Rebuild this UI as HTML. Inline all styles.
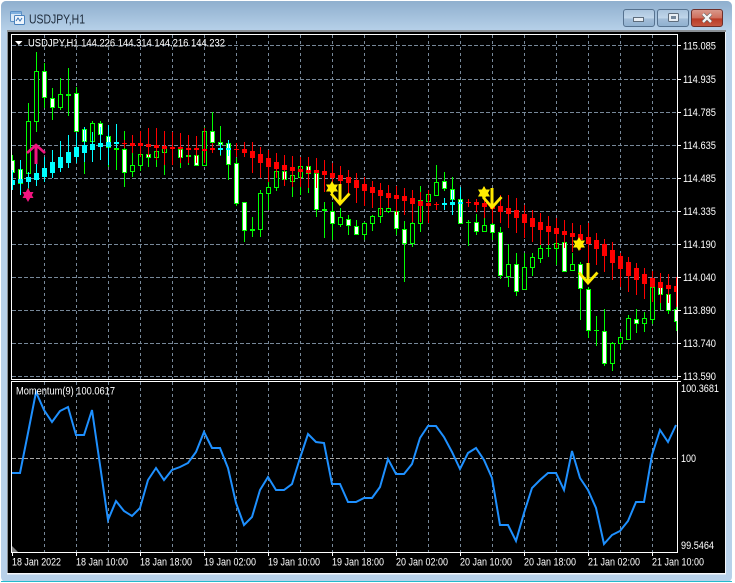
<!DOCTYPE html>
<html><head><meta charset="utf-8"><title>USDJPY,H1</title>
<style>
html,body{margin:0;padding:0;background:#fff;width:735px;height:583px;overflow:hidden}
svg{display:block}
text{font-family:"Liberation Sans",sans-serif;font-size:10.8px;fill:#fff}
</style></head><body>
<svg width="735" height="583" viewBox="0 0 735 583" xmlns="http://www.w3.org/2000/svg">
<defs>
<linearGradient id="tb" x1="0" y1="0" x2="0" y2="1"><stop offset="0" stop-color="#8fafce"/><stop offset="1" stop-color="#b8d2ea"/></linearGradient>
<linearGradient id="bt" x1="0" y1="0" x2="0" y2="1"><stop offset="0" stop-color="#a9c3dc"/><stop offset=".5" stop-color="#c0d6ea"/><stop offset=".55" stop-color="#a2bdd8"/><stop offset="1" stop-color="#8fb0cf"/></linearGradient>
<linearGradient id="cl" x1="0" y1="0" x2="0" y2="1"><stop offset="0" stop-color="#d99a8e"/><stop offset=".5" stop-color="#cf6f5c"/><stop offset=".55" stop-color="#b93a26"/><stop offset="1" stop-color="#c65a44"/></linearGradient>
<clipPath id="mc"><rect x="12" y="35" width="665" height="344"/></clipPath>
<clipPath id="ic"><rect x="12" y="382" width="665" height="170"/></clipPath>
</defs>
<rect x="1" y="1" width="731" height="581" rx="5" fill="#b8d1ea"/>
<path d="M6 1H727a5 5 0 0 1 5 5V32H1V6a5 5 0 0 1 5-5z" fill="url(#tb)"/>
<rect x="1" y="581" width="731" height="1" fill="#25b9cc"/>
<rect x="7" y="30" width="719" height="2" fill="#8a8f94"/>
<rect x="7" y="32" width="1" height="542" fill="#8a8f94"/>
<rect x="725" y="32" width="1" height="542" fill="#f2f6fb"/>
<rect x="7" y="573" width="719" height="1.5" fill="#f4f7fb"/>
<rect x="8" y="32" width="717" height="541" fill="#000"/>

<!-- title -->
<g>
<rect x="10.5" y="11.5" width="11" height="10" rx="1" fill="#d9e8f6" stroke="#5b8fc4"/>
<rect x="14.5" y="15.5" width="10" height="9" rx="1" fill="#eef5fc" stroke="#4a82bd"/>
<path d="M16 21l2-3 2 3 2-3" fill="none" stroke="#3a74b5"/>
<rect x="11" y="12" width="10" height="2" fill="#7fb0df"/>
</g>
<text x="29" y="23.5" style="font-size:13px;fill:#1d2a3a" textLength="56" lengthAdjust="spacingAndGlyphs">USDJPY,H1</text>
<rect x="623.5" y="9.5" width="31" height="17" rx="2.5" fill="url(#bt)" stroke="#56728f"/>
<rect x="633.5" y="17.5" width="10" height="4" fill="#e8eef4" stroke="#5e6d7c"/>
<rect x="657.5" y="9.5" width="31" height="17" rx="2.5" fill="url(#bt)" stroke="#56728f"/>
<rect x="668.5" y="13.5" width="10" height="8" rx="1" fill="#e8eef4" stroke="#5e6d7c"/><rect x="671" y="16" width="5" height="3" fill="#73869a"/>
<rect x="691.5" y="9.5" width="31" height="17" rx="2.5" fill="url(#cl)" stroke="#6e2f2a"/>
<path d="M703 14l8 8M711 14l-8 8" stroke="#5c5c5c" stroke-width="3.6"/>
<path d="M703 14l8 8M711 14l-8 8" stroke="#f4f4f4" stroke-width="2.4"/>

<!-- grid -->
<g stroke="#778899" stroke-width="1" fill="none" shape-rendering="crispEdges">
<path stroke-dasharray="4 2" d="M12 45.5H677M12 79.5H677M12 112.5H677M12 145.5H677M12 178.5H677M12 211.5H677M12 244.5H677M12 277.5H677M12 310.5H677M12 343.5H677M12 376.5H677"/>
<path stroke-dasharray="3 3" d="M44.5 35V379M76.5 35V379M108.5 35V379M140.5 35V379M172.5 35V379M204.5 35V379M236.5 35V379M268.5 35V379M300.5 35V379M332.5 35V379M364.5 35V379M396.5 35V379M428.5 35V379M460.5 35V379M492.5 35V379M524.5 35V379M556.5 35V379M588.5 35V379M620.5 35V379M652.5 35V379"/>
<path stroke-dasharray="3 3" d="M44.5 382V552M76.5 382V552M108.5 382V552M140.5 382V552M172.5 382V552M204.5 382V552M236.5 382V552M268.5 382V552M300.5 382V552M332.5 382V552M364.5 382V552M396.5 382V552M428.5 382V552M460.5 382V552M492.5 382V552M524.5 382V552M556.5 382V552M588.5 382V552M620.5 382V552M652.5 382V552"/>
<path stroke="#a8a8a8" stroke-dasharray="4 2" d="M12 458.5H677"/>
</g>

<g clip-path="url(#mc)" shape-rendering="crispEdges">
<!-- green wicks -->
<path fill="none" stroke="#00ff00" d="M12.5 155V178M20.5 160V190M28.5 103V192M36.5 52V132M44.5 63V108M52.5 88V120M60.5 78V110M68.5 68V116M76.5 87V131M84.5 127V174M92.5 121V162M100.5 121V155M108.5 135V167M116.5 148V170M124.5 131V187M132.5 135V177M140.5 153V171M148.5 154V167M156.5 150V167M164.5 140V175M172.5 147V150M180.5 148V168M188.5 150V165M196.5 150V165M204.5 127V166M212.5 112V142M220.5 126V156M228.5 140V180M236.5 158V206M244.5 202V242M252.5 217V237M260.5 190V237M268.5 182V210M276.5 170V191M284.5 168V185M292.5 173V197M300.5 165V195M308.5 165V193M316.5 170V217M324.5 202V238M332.5 202V240M340.5 208V227M348.5 215V235M356.5 220V235M364.5 222V240M372.5 215V231M380.5 207V223M388.5 208V213M396.5 210V235M404.5 221V282M412.5 220V247M420.5 186V232M428.5 192V210M436.5 165V195M444.5 172V191M452.5 177V200M460.5 198V223M468.5 220V246M476.5 214V235M484.5 218V231M492.5 221V240M500.5 227V279M508.5 244V287M516.5 253V296M524.5 253V290M532.5 253V276M540.5 244V263M548.5 243V257M556.5 243V265M564.5 241V272M572.5 253V271M580.5 262V320M588.5 287V338M596.5 316V346M604.5 309V366M612.5 342V371M620.5 332V350M628.5 315V339M636.5 309V333M644.5 312V332M652.5 287V324M660.5 282V310M668.5 293V314M676.5 307V331"/>
<!-- doji -->
<path fill="#00ff00" d="M66 94h5v2h-5zM114 148h5v2h-5zM170 147h5v2h-5zM186 155h5v2h-5zM250 229h5v2h-5zM322 209h5v2h-5zM466 222h5v1h-5zM546 248h5v1h-5zM594 330h5v1h-5z"/>
<!-- white bodies -->
<path fill="#fff" stroke="#00ff00" d="M10.5 160.5h4V172.5h-4zM18.5 169.5h4V183.5h-4zM42.5 71.5h4V97.5h-4zM50.5 98.5h4V107.5h-4zM74.5 93.5h4V131.5h-4zM82.5 129.5h4V141.5h-4zM98.5 123.5h4V134.5h-4zM106.5 136.5h4V147.5h-4zM122.5 149.5h4V172.5h-4zM146.5 154.5h4V157.5h-4zM178.5 149.5h4V157.5h-4zM194.5 155.5h4V165.5h-4zM210.5 131.5h4V142.5h-4zM218.5 142.5h4V144.5h-4zM226.5 143.5h4V164.5h-4zM234.5 163.5h4V203.5h-4zM242.5 202.5h4V230.5h-4zM282.5 171.5h4V179.5h-4zM306.5 166.5h4V173.5h-4zM314.5 173.5h4V209.5h-4zM330.5 211.5h4V223.5h-4zM346.5 219.5h4V225.5h-4zM354.5 226.5h4V234.5h-4zM394.5 211.5h4V228.5h-4zM402.5 229.5h4V243.5h-4zM442.5 181.5h4V188.5h-4zM450.5 189.5h4V199.5h-4zM458.5 199.5h4V223.5h-4zM474.5 222.5h4V231.5h-4zM490.5 224.5h4V232.5h-4zM498.5 232.5h4V275.5h-4zM514.5 264.5h4V291.5h-4zM562.5 242.5h4V271.5h-4zM578.5 264.5h4V288.5h-4zM586.5 289.5h4V330.5h-4zM602.5 331.5h4V363.5h-4zM634.5 319.5h4V323.5h-4zM658.5 287.5h4V294.5h-4zM666.5 294.5h4V310.5h-4zM674.5 309.5h4V321.5h-4z"/>
<!-- hollow bodies -->
<path fill="#000" stroke="#00ff00" d="M26.5 121.5h4V173.5h-4zM34.5 71.5h4V121.5h-4zM58.5 94.5h4V107.5h-4zM90.5 123.5h4V141.5h-4zM130.5 165.5h4V171.5h-4zM138.5 154.5h4V165.5h-4zM154.5 151.5h4V157.5h-4zM162.5 147.5h4V152.5h-4zM202.5 131.5h4V165.5h-4zM258.5 193.5h4V229.5h-4zM266.5 187.5h4V193.5h-4zM274.5 171.5h4V187.5h-4zM290.5 175.5h4V181.5h-4zM298.5 166.5h4V177.5h-4zM338.5 217.5h4V224.5h-4zM362.5 223.5h4V234.5h-4zM370.5 216.5h4V223.5h-4zM378.5 208.5h4V216.5h-4zM386.5 208.5h4V211.5h-4zM410.5 223.5h4V243.5h-4zM418.5 200.5h4V223.5h-4zM426.5 194.5h4V201.5h-4zM434.5 182.5h4V195.5h-4zM482.5 225.5h4V231.5h-4zM506.5 264.5h4V276.5h-4zM522.5 267.5h4V289.5h-4zM530.5 257.5h4V267.5h-4zM538.5 248.5h4V258.5h-4zM554.5 243.5h4V248.5h-4zM570.5 264.5h4V270.5h-4zM610.5 343.5h4V363.5h-4zM618.5 337.5h4V343.5h-4zM626.5 318.5h4V339.5h-4zM642.5 318.5h4V323.5h-4zM650.5 287.5h4V319.5h-4z"/>
<!-- cyan -->
<path fill="none" stroke="#00ffff" d="M12.5 170V190M20.5 160V195M28.5 172V188M36.5 163V186M44.5 157V182M52.5 150V178M60.5 141V172M68.5 135V168M76.5 133V163M84.5 127V162M92.5 132V162M100.5 127V160M108.5 125V165M116.5 124V148M220.5 143V155M228.5 140V156M444.5 198V210M452.5 190V215M460.5 187V217"/>
<path fill="#00ffff" d="M10 180h5v5h-5zM18 179h5v4h-5zM26 177h5v5h-5zM34 173h5v7h-5zM42 168h5v9h-5zM50 162h5v11h-5zM58 157h5v11h-5zM66 152h5v11h-5zM74 147h5v10h-5zM82 145h5v8h-5zM90 144h5v6h-5zM98 143h5v4h-5zM106 142h5v5h-5zM114 142h5v2h-5zM218 148h5v2h-5zM226 148h5v2h-5zM442 203h5v2h-5zM450 202h5v3h-5zM458 202h5v2h-5z"/>
<!-- red -->
<path fill="none" stroke="#ff0000" d="M124.5 140V148M132.5 135V153M140.5 131V157M148.5 128V157M156.5 128V160M164.5 131V165M172.5 132V165M180.5 133V163M188.5 135V163M196.5 136V163M204.5 128V163M212.5 143V153M236.5 143V157M244.5 142V157M252.5 142V173M260.5 147V178M268.5 150V182M276.5 153V178M284.5 155V186M292.5 156V187M300.5 157V187M308.5 157V188M316.5 158V188M324.5 160V192M332.5 163V192M340.5 166V197M348.5 170V195M356.5 173V203M364.5 177V206M372.5 181V208M380.5 183V215M388.5 185V208M396.5 186V215M404.5 188V215M412.5 190V222M420.5 192V222M428.5 190V223M436.5 202V210M468.5 199V207M476.5 199V212M484.5 187V218M492.5 195V223M500.5 195V223M508.5 195V228M516.5 198V233M524.5 205V238M532.5 210V242M540.5 213V245M548.5 216V245M556.5 218V248M564.5 220V248M572.5 223V252M580.5 225V250M588.5 223V263M596.5 233V265M604.5 239V272M612.5 242V280M620.5 253V287M628.5 257V292M636.5 263V295M644.5 268V299M652.5 271V302M660.5 273V303M668.5 274V303M676.5 277V307"/>
<path fill="#ff0000" d="M122 143h5v1h-5zM130 143h5v3h-5zM138 143h5v3h-5zM146 144h5v3h-5zM154 145h5v3h-5zM162 146h5v3h-5zM170 147h5v2h-5zM178 147h5v2h-5zM186 148h5v2h-5zM194 148h5v2h-5zM202 149h5v2h-5zM210 148h5v2h-5zM234 149h5v1h-5zM242 149h5v4h-5zM250 151h5v7h-5zM258 154h5v9h-5zM266 158h5v9h-5zM274 162h5v7h-5zM282 165h5v5h-5zM290 167h5v4h-5zM298 169h5v3h-5zM306 170h5v3h-5zM314 170h5v3h-5zM322 171h5v4h-5zM330 173h5v5h-5zM338 175h5v6h-5zM346 177h5v6h-5zM354 180h5v8h-5zM362 184h5v7h-5zM370 187h5v6h-5zM378 190h5v6h-5zM386 193h5v5h-5zM394 195h5v4h-5zM402 196h5v5h-5zM410 198h5v6h-5zM418 201h5v5h-5zM426 203h5v3h-5zM434 204h5v1h-5zM466 202h5v1h-5zM474 202h5v3h-5zM482 203h5v4h-5zM490 205h5v4h-5zM498 206h5v6h-5zM506 208h5v6h-5zM514 210h5v8h-5zM522 214h5v9h-5zM530 218h5v9h-5zM538 222h5v8h-5zM546 226h5v6h-5zM554 228h5v6h-5zM562 231h5v4h-5zM570 233h5v4h-5zM578 234h5v6h-5zM586 237h5v7h-5zM594 240h5v9h-5zM602 244h5v12h-5zM610 250h5v13h-5zM618 256h5v13h-5zM626 262h5v14h-5zM634 268h5v12h-5zM642 274h5v10h-5zM650 278h5v9h-5zM658 282h5v6h-5zM666 285h5v4h-5zM674 286h5v6h-5z"/>
</g>

<!-- arrows and stars -->
<g fill="none">
<path d="M36 147V164" stroke="#f0147f" stroke-width="3"/>
<path d="M27 153L36 145L45 153" stroke="#f0147f" stroke-width="2.6"/>
<path d="M28 188L33.5 198L22.5 198zM28 202L22.5 192L33.5 192z" fill="#f0147f"/>
<path d="M340 184V203" stroke="#ffe800" stroke-width="3"/>
<path d="M331 193.5L340 204L349.5 193.5" stroke="#ffe800" stroke-width="2.8"/>
<path d="M492 188V206" stroke="#ffe800" stroke-width="3"/>
<path d="M483 197L492 207.5L501.5 197" stroke="#ffe800" stroke-width="2.8"/>
<path d="M588 263V281" stroke="#ffe800" stroke-width="3"/>
<path d="M579 272.5L588 283L597.5 272.5" stroke="#ffe800" stroke-width="2.8"/>
<path d="M332 181L338 191.5H326zM332 195L326 184.5H338z" fill="#ffee00"/>
<path d="M484 186L490 196.5H478zM484 200L478 189.5H490z" fill="#ffee00"/>
<path d="M579 237L585 247.5H573zM579 251L573 240.5H585z" fill="#ffee00"/>
</g>

<!-- momentum -->
<g clip-path="url(#ic)">
<polygon points="12,546 12,552 18,552" fill="#808080"/>
<polyline fill="none" stroke="#1e90ff" stroke-width="2" stroke-linejoin="miter" points="12,473 20,473 28,433 36,392 44,410 52,422 60,411 68,407 76,435 84,435 92,410 100,465 108,520 116,501 124,511 132,516 140,508 148,480 156,468 164,480 172,470 180,467 188,463 196,452 204,432 212,448 220,448 228,468 236,503 244,525 252,517 260,490 268,477 276,490 284,490 292,484 300,458 308,434 316,442 324,443 332,484 340,484 348,502 356,502 364,498 372,498 380,487 388,459 396,474 404,474 412,464 420,438 428,426 436,426 444,437 452,452 460,469 468,453 476,448 484,460 492,478 500,525 508,525 516,541 524,513 532,488 540,480 548,473 556,473 564,490 572,451 580,478 588,490 596,508 604,544 612,535 620,531 628,521 636,502 644,502 652,455 660,430 668,442 676,425"/>
</g>

<!-- frames & ticks -->
<g fill="none" stroke="#fff" shape-rendering="crispEdges">
<rect x="11.5" y="34.5" width="666" height="345"/>
<rect x="11.5" y="381.5" width="666" height="171"/>
<path d="M678 45.5h3M678 79.5h3M678 112.5h3M678 145.5h3M678 178.5h3M678 211.5h3M678 244.5h3M678 277.5h3M678 310.5h3M678 343.5h3M678 376.5h3"/>
<path d="M678 381.5h3"/>
<path d="M12.5 553v3M76.5 553v3M140.5 553v3M204.5 553v3M268.5 553v3M332.5 553v3M396.5 553v3M460.5 553v3M524.5 553v3M588.5 553v3M652.5 553v3"/>
</g>

<!-- labels -->
<path d="M15 41h7.5l-3.7 4z" fill="#fff"/>
<text x="28" y="46.5" textLength="197" lengthAdjust="spacingAndGlyphs">USDJPY,H1  144.226 144.314 144.216 144.232</text>
<text x="16" y="394.5" textLength="99" lengthAdjust="spacingAndGlyphs">Momentum(9) 100.0617</text>
<g>
<text x="683" y="49.5" textLength="33" lengthAdjust="spacingAndGlyphs">115.085</text>
<text x="683" y="83" textLength="33" lengthAdjust="spacingAndGlyphs">114.935</text>
<text x="683" y="116" textLength="33" lengthAdjust="spacingAndGlyphs">114.785</text>
<text x="683" y="149" textLength="33" lengthAdjust="spacingAndGlyphs">114.635</text>
<text x="683" y="182" textLength="33" lengthAdjust="spacingAndGlyphs">114.485</text>
<text x="683" y="215" textLength="33" lengthAdjust="spacingAndGlyphs">114.335</text>
<text x="683" y="248" textLength="33" lengthAdjust="spacingAndGlyphs">114.190</text>
<text x="683" y="281" textLength="33" lengthAdjust="spacingAndGlyphs">114.040</text>
<text x="683" y="314" textLength="33" lengthAdjust="spacingAndGlyphs">113.890</text>
<text x="683" y="347" textLength="33" lengthAdjust="spacingAndGlyphs">113.740</text>
<text x="683" y="380" textLength="33" lengthAdjust="spacingAndGlyphs">113.590</text>
<text x="681" y="392" textLength="38" lengthAdjust="spacingAndGlyphs">100.3681</text>
<text x="681" y="462" textLength="15" lengthAdjust="spacingAndGlyphs">100</text>
<text x="681" y="549" textLength="33" lengthAdjust="spacingAndGlyphs">99.5464</text>
</g>
<g>
<text x="12" y="565.5" textLength="49" lengthAdjust="spacingAndGlyphs">18 Jan 2022</text>
<text x="76" y="565.5" textLength="52" lengthAdjust="spacingAndGlyphs">18 Jan 10:00</text>
<text x="140" y="565.5" textLength="52" lengthAdjust="spacingAndGlyphs">18 Jan 18:00</text>
<text x="204" y="565.5" textLength="52" lengthAdjust="spacingAndGlyphs">19 Jan 02:00</text>
<text x="268" y="565.5" textLength="52" lengthAdjust="spacingAndGlyphs">19 Jan 10:00</text>
<text x="332" y="565.5" textLength="52" lengthAdjust="spacingAndGlyphs">19 Jan 18:00</text>
<text x="396" y="565.5" textLength="52" lengthAdjust="spacingAndGlyphs">20 Jan 02:00</text>
<text x="460" y="565.5" textLength="52" lengthAdjust="spacingAndGlyphs">20 Jan 10:00</text>
<text x="524" y="565.5" textLength="52" lengthAdjust="spacingAndGlyphs">20 Jan 18:00</text>
<text x="588" y="565.5" textLength="52" lengthAdjust="spacingAndGlyphs">21 Jan 02:00</text>
<text x="652" y="565.5" textLength="52" lengthAdjust="spacingAndGlyphs">21 Jan 10:00</text>
</g>
</svg>
</body></html>
